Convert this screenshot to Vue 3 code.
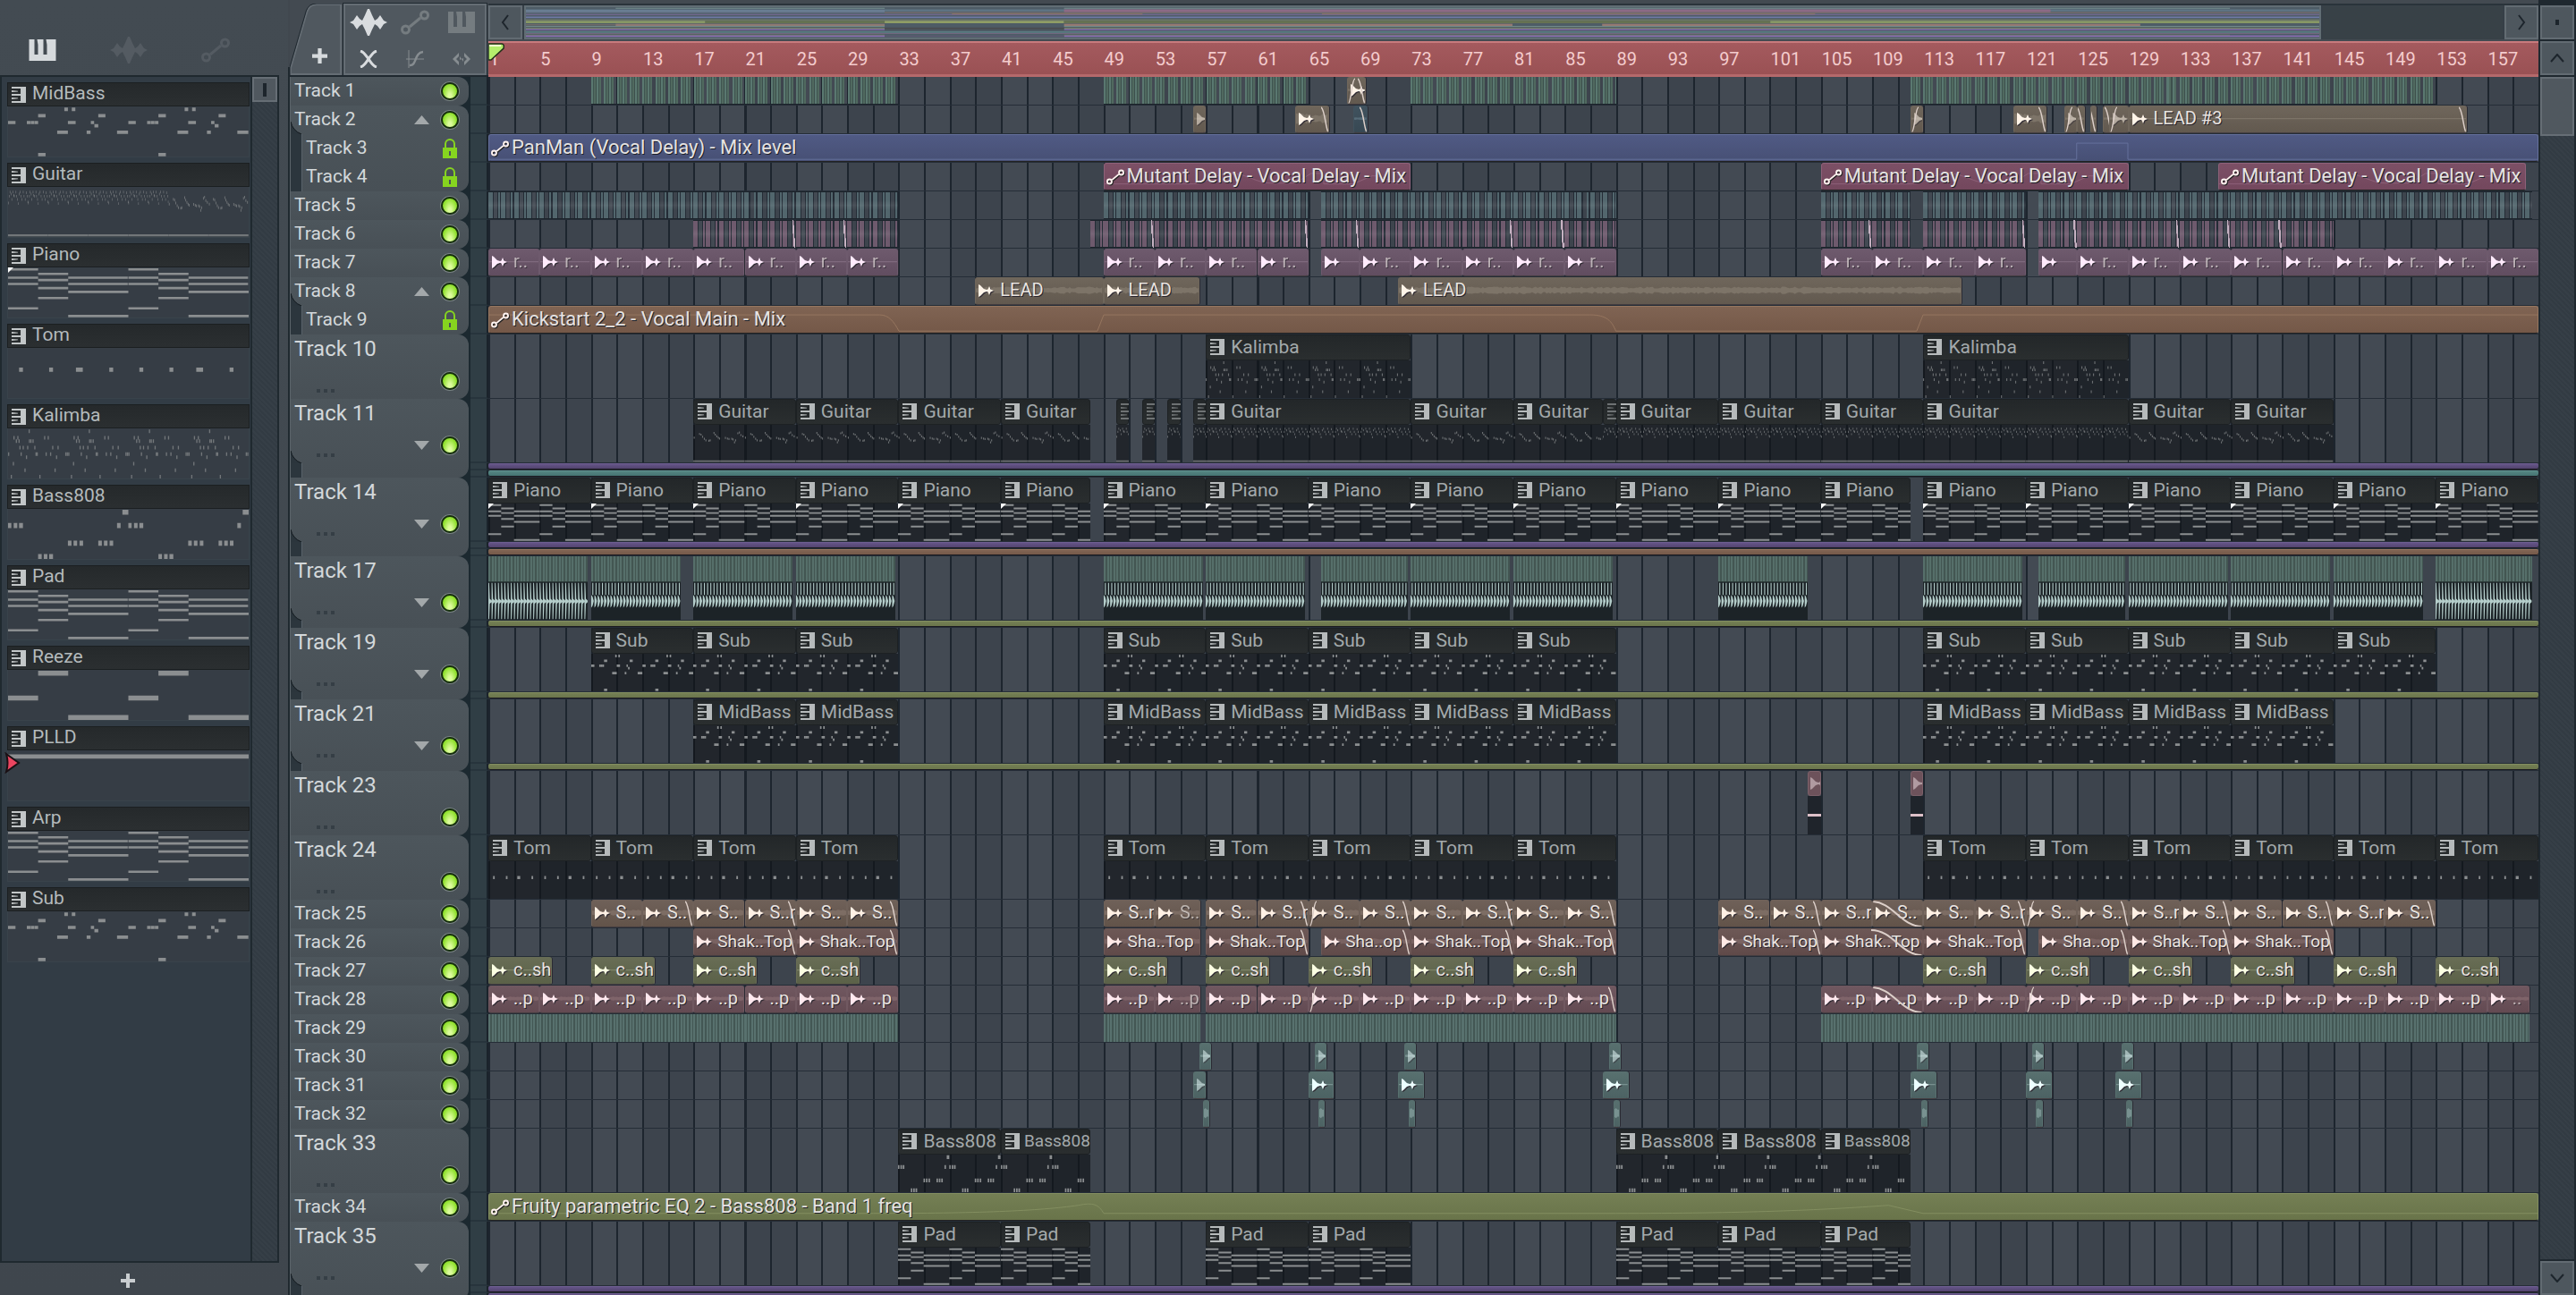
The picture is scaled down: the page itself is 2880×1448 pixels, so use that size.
<script setup>
const BARS = 160
const pct = (v) => (v / BARS) * 100 + '%'
const place = (c) => ({ left: pct(c.s), width: pct(c.e - c.s) })
const split = (a, b, step = 8) => {
  const out = []
  for (let s = a; s < b; s += step) out.push([s, Math.min(s + step, b)])
  return out
}

/* note patterns: [period, [x, y, width, height]...], 101 units per bar, 170 units tall */
const low = (y, h, list) => list.map(([x, w]) => [x, y, w, h])
const subNotes = [
  ...low(4, 12, [[189, 12], [214, 12]]),
  ...low(26, 11, [[101, 25], [303, 24]]),
  ...low(49, 11, [[0, 25], [63, 12], [76, 12], [89, 12], [201, 26], [278, 11]]),
  ...low(60, 11, [[290, 13]]),
  ...low(82, 11, [[165, 36], [264, 13], [366, 37]]),
  ...low(158, 11, [[101, 25]])
]
const chordNotes = [
  ...low(3, 8, [[0, 101]]),
  ...low(18, 8, [[101, 101]]),
  ...low(31, 8, [[0, 101], [202, 200]]),
  ...low(39, 8, [[101, 101]]),
  ...low(52, 8, [[0, 101], [202, 200]]),
  ...low(66, 8, [[101, 101]]),
  ...low(79, 8, [[202, 202]]),
  ...low(100, 8, [[101, 101]]),
  ...low(135, 8, [[0, 101]]),
  ...low(161, 8, [[202, 202]])
]
const kalimbaNotes = [
  [69, 4], [18, 26], [31, 26], [121, 26], [133, 26], [26, 37], [35, 37], [70, 37], [75, 37], [82, 37],
  [38, 59], [49, 59], [64, 59], [88, 59], [148, 59], [166, 59], [0, 81], [42, 81], [92, 81], [96, 81],
  [126, 81], [141, 81], [192, 81], [197, 81], [60, 92], [161, 92], [16, 114], [55, 136], [156, 136], [9, 158], [105, 158]
].map(([x, y]) => [x, y, 4, 12])
/* in clips this figure spans four bars instead of two */
const kalimbaWide = kalimbaNotes.map(([x, y, w, h]) => [x * 2, y, w * 2, h])
const guitarA = [
  [0, 50], [10, 27], [17, 13], [28, 20], [35, 38], [47, 13], [54, 24], [60, 27], [76, 13], [82, 27], [92, 38], [99, 52],
  [108, 20], [118, 13], [128, 27], [138, 38], [150, 13], [158, 27], [170, 38], [180, 15], [190, 27], [197, 46]
].map(([x, y]) => [x, y, 6, 9])
const guitarB = [
  [4, 54], [46, 37], [58, 40], [70, 50], [84, 59], [96, 66], [120, 68], [130, 66], [160, 32], [170, 40], [182, 48], [194, 54],
  [204, 58], [250, 55], [266, 58], [278, 60], [300, 59], [310, 62], [322, 75], [330, 66], [348, 34], [360, 30], [372, 42], [388, 48]
].map(([x, y]) => [x, y, 8, 9])
const base = [[0, 161, 402, 7]]
const patterns = {
  sub: [404, subNotes],
  chord: [404, chordNotes],
  tom: [404, [[37, 67, 13, 14], [138, 67, 13, 14], [228, 67, 23, 14], [340, 67, 13, 14]]],
  kalimba: [404, kalimbaWide],
  bass: [404, [
    ...low(3, 17, [[384, 20]]),
    ...low(48, 17, [[0, 11], [19, 12], [37, 13], [366, 12]]),
    ...low(108, 17, [[201, 12], [220, 12], [240, 12], [303, 12], [322, 12], [341, 12]]),
    ...low(153, 17, [[101, 12], [120, 12], [138, 13]])
  ]],
  reeze: [404, [[101, 3, 101, 17], [0, 87, 101, 17], [202, 153, 202, 17]]],
  plld: [808, [[0, 14, 808, 14]]],
  guitarA: [404, [...guitarA, ...guitarA.map(([x, y, w, h]) => [x + 202, y, w, h]), ...base]],
  guitarB: [404, [...guitarB, ...base]]
}
const notePath = (name, bars, from = 0) => {
  const [period, notes] = patterns[name]
  const end = (from + bars) * 101
  let d = ''
  for (let o = from * 101; o < end; o += period)
    for (const [x, y, w, h] of notes) {
      const a = o + x
      if (a < end) d += `M${a} ${y}h${Math.min(w, end - a)}v${h}h${-Math.min(w, end - a)}z`
    }
  return d
}

const pickerItems = [
  { name: 'MidBass', d: notePath('sub', 8), w: 808 },
  { name: 'Guitar', d: notePath('guitarA', 16) + notePath('guitarB', 8, 16), w: 2424 },
  { name: 'Piano', d: notePath('chord', 8), w: 808, mark: true },
  { name: 'Tom', d: notePath('tom', 8), w: 808 },
  { name: 'Kalimba', d: notePath('kalimba', 16), w: 1616 },
  { name: 'Bass808', d: notePath('bass', 8), w: 808 },
  { name: 'Pad', d: notePath('chord', 8), w: 808 },
  { name: 'Reeze', d: notePath('reeze', 8), w: 808 },
  { name: 'PLLD', d: notePath('plld', 8), w: 808, playing: true },
  { name: 'Arp', d: notePath('chord', 8), w: 808 },
  { name: 'Sub', d: notePath('sub', 8), w: 808 }
]

/* waveform outline around the middle of a clip */
const noise = (i) => Math.abs(Math.sin(i * 12.9898) * 43758.5453) % 1
const wave = (bars, amp) => {
  const n = Math.max(4, Math.round(bars * 7))
  let up = 'M0 16'
  let down = ''
  for (let i = 0; i <= n; i++) {
    const x = (i / n) * bars
    const a = 0.6 + amp * (0.4 + 0.6 * noise(i + bars))
    up += `L${x.toFixed(2)} ${(15 - a).toFixed(1)}`
    down = `L${x.toFixed(2)} ${(15 + a).toFixed(1)}` + down
  }
  return up + down + 'z'
}
const drumWave = (bars, both) => {
  let d = ''
  for (let k = 0; k < bars * 4; k++) {
    if (both) d += `M${k} 2h.25L${k + 0.45} 44L${k + 1} 49V53L${k + 0.45} 57L${k + 0.25} 98h-.25z`
    else d += `M${k + 0.35} 2h.3V34h-.3zM${k} 34L${k + 0.4} 38L${k + 0.8} 50L${k + 0.4} 63L${k} 68z`
  }
  return d
}

const midi = (label, pat, list, extra = {}) => list.map(([s, e]) => ({
  kind: 'midi', label, s, e, d: notePath(pat, e - s), w: (e - s) * 101, ...extra
}))
const stub = (s) => midi('', 'guitarA', [[s, s + 1]], { dim: true })
const audio = (color, label, list, extra = {}) => list.map(([s, e, o]) => ({
  kind: 'audio', color, label, s, e, amp: 1, ...extra, ...(o || {})
})).map((c) => ({ ...c, d: wave(c.e - c.s, c.amp) }))
const auto = (color, label, s, e, d) => ({ kind: 'auto', color, label, s, e, d })
const fill = (kind, color, list) => list.map(([s, e]) => ({ kind, color, s, e }))
const strip = (color) => ({ size: 'xs', clips: [{ kind: 'strip', color, s: 0, e: 160 }] })
const ticks = (list) => list.map((s) => ({ kind: 'tick', s, e: s + 0.25 }))
const drum = (s, e, both) => ({ kind: 'drum', s, e, d: drumWave(e - s, both) })
const O = { out: true }
const I = { in: true }
const B = { big: true }

const mutant = 'M0 25H7C8 25 8.5 12 10 12C11 12 12 24 13 24H15L16.2 12H17.2V25H19.5L21 15C22 15 22 20 23 25'
const eight = (a, b) => split(a, b, 8)
const four = (a, b) => split(a, b, 4)
const S = (list) => list.flatMap(([s, e, label, o]) => audio('sand', label, [[s, e, o]], { amp: 3 }))
const wide = [...eight(48, 88)]
const crash = (starts) => audio('moss', 'c..sh', starts.map((s) => [s, s + 4.95]), { amp: 0 })
const perc = (list) => audio('rose', '..p', list, { amp: 2 })

const groups = [
  [{ name: 'Track 1', clips: [
    ...fill('comb', 'green', [[8, 32], [48, 64], [72, 88], [111, 152]]),
    ...audio('tan', '', [[67, 68.5, { in: true, out: true }]])] }],
  [
    { name: 'Track 2', fold: 'up', clips: [
      ...audio('tan', '', [[55, 56, { dim: true }], [63, 65.6, { out: true, amp: 6 }], [111, 112, { dim: true, in: true }],
        [119, 121.6, { out: true, amp: 6 }], [123, 124, { dim: true, in: true }], [124, 124.6, { none: true, out: true }],
        [125, 125.5, { none: true, out: true }], [126, 126.8, { none: true, out: true }], [126.5, 128, { dim: true, in: true }]]),
      ...audio('slate', '', [[67.5, 68.6, { none: true, out: true }]]),
      ...audio('tan', 'LEAD #3', [[128, 154.4, { out: true, amp: 0 }]])] },
    { name: 'Track 3', child: true, lock: true, clips: [
      auto('blue', 'PanMan (Vocal Delay) - Mix level', 0, 160, 'M0 30H124V10H128V30H160')] },
    { name: 'Track 4', child: true, lock: true, clips: [48, 104, 135].map((s) =>
      auto('wine', 'Mutant Delay - Vocal Delay - Mix', s, s + 24, mutant)) }
  ],
  [{ name: 'Track 5', clips: fill('hits', 'steel', [[0, 32], [48, 64], [65, 88], [104, 111], [112, 120], [121, 159.5]]) }],
  [{ name: 'Track 6', clips: [
    ...fill('hits', 'plum', [[16, 32], [47, 48], [48, 64], [65, 88], [104, 111], [112, 120], [121, 144]]),
    ...ticks([23.7, 27.7, 51.7, 63.7, 67.7, 79.7, 83.7, 107.7, 119.7, 123.7, 131.7, 135.7, 139.7])] }],
  [{ name: 'Track 7', clips: audio('plum', 'r..', [...four(0, 32), ...four(48, 64), [65, 68, { label: '' }],
    ...four(68, 88), ...four(104, 120), [121, 124, { label: '' }], ...four(124, 160)], { soft: true, amp: 0 }) }],
  [
    { name: 'Track 8', fold: 'up', clips: audio('tan', 'LEAD', [[38, 48], [48, 55.5], [71, 115]], { amp: 4 }) },
    { name: 'Track 9', child: true, lock: true, clips: [
      auto('brown', 'Kickstart 2_2 - Vocal Main - Mix', 0, 160,
        'M0 10H30.5C31.2 10 31.6 18 32 30H47.5L48 10H86C87.3 10 87.7 18 88 30H111.5L112 10H160')] }
  ],
  [{ name: 'Track 10', size: 'l', clips: midi('Kalimba', 'kalimba', [[56, 72], [112, 128]]) }],
  [
    { name: 'Track 11', size: 'l', fold: 'down', clips: [
      ...midi('Guitar', 'guitarB', [...eight(16, 40), [40, 47]]), ...[49, 51, 53, 55].flatMap(stub),
      ...midi('Guitar', 'guitarA', [[56, 72]]), ...midi('Guitar', 'guitarB', [[72, 80], [80, 87]]), ...stub(87),
      ...midi('Guitar', 'guitarA', [...eight(88, 112), [112, 128]]), ...midi('Guitar', 'guitarB', eight(128, 144))] },
    strip('violet'), strip('teal')
  ],
  [
    { name: 'Track 14', size: 'l', fold: 'down', clips: midi('Piano', 'chord',
      [...eight(0, 40), [40, 47], ...eight(48, 104), [104, 111], ...eight(112, 160)], { mark: true }) },
    strip('violet'), strip('brown')
  ],
  [
    { name: 'Track 17', size: 'l', fold: 'down', clips: [
      drum(0, 7.75, true), ...[[8, 15], [16, 23.75], [24, 31.75], [48, 55.75], [56, 63.75], [65, 71.75], [72, 79.75],
        [80, 87.75], [96, 103], [112, 119.75], [121, 127.75], [128, 135.75], [136, 143.75], [144, 151]].map(([a, b]) => drum(a, b)),
      drum(152, 159.5, true)] },
    strip('olive')
  ],
  [{ name: 'Track 19', size: 'l', fold: 'down', clips: midi('Sub', 'sub', [...eight(8, 32), ...wide, ...eight(112, 152)]) }, strip('olive')],
  [{ name: 'Track 21', size: 'l', fold: 'down', clips: midi('MidBass', 'sub', [...eight(16, 32), ...wide, ...eight(112, 144)]) }, strip('olive')],
  [{ name: 'Track 23', size: 'l', clips: [{ kind: 'shot', s: 103, e: 104 }, { kind: 'shot', s: 111, e: 112 }] }],
  [{ name: 'Track 24', size: 'l', clips: midi('Tom', 'tom', [...eight(0, 32), ...wide, ...eight(112, 160)]) }],
  [{ name: 'Track 25', clips: S([
    [8, 12, 'S..'], [12, 16, 'S..', O], [16, 20, 'S..'], [20, 24, 'S..r', O], [24, 28, 'S..'], [28, 32, 'S..', O],
    [48, 52, 'S..r'], [52, 55.6, 'S..', { soft: true }], [56, 60, 'S..'], [60, 64, 'S..r', O], [64, 68, 'S..', I], [68, 72, 'S..', O],
    [72, 76, 'S..'], [76, 80, 'S..r', O], [80, 84, 'S..'], [84, 88, 'S..', O], [96, 100, 'S..'], [100, 104, 'S..', O],
    [104, 108, 'S..r'], [108, 112, 'S..', B], [112, 116, 'S..'], [116, 120, 'S..r', O], [120, 124, 'S..', I], [124, 128, 'S..', O],
    [128, 132, 'S..r'], [132, 136, 'S..', O], [136, 140, 'S..'], [140, 144, 'S..', O], [144, 148, 'S..r'], [148, 152, 'S..', O]]) }],
  [{ name: 'Track 26', clips: [
    ...audio('clay', 'Shak..Top', [[16, 24, O], [24, 32, O], [48, 55.6, { label: 'Sha..Top' }], [56, 64, O],
      [65, 72, { label: 'Sha..op', out: true }], [72, 80, O], [80, 88, O], [96, 104, O], [104, 112, B], [112, 120, O],
      [121, 128, { label: 'Sha..op', out: true }], [128, 136, O], [136, 144, O]], { amp: 3, tight: true })] }],
  [{ name: 'Track 27', clips: crash([0, 8, 16, 24, 48, 56, 64, 72, 80, 112, 120, 128, 136, 144, 152]) }],
  [{ name: 'Track 28', clips: perc([...four(0, 32), [48, 52], [52, 55.6, { soft: true }], ...four(56, 64), [64, 68, I], ...four(68, 84),
    [84, 88, O], [104, 108], [108, 112, B], ...four(112, 120), [120, 124, I], ...four(124, 156), [156, 159.3, { label: '..', soft: true }]]) }],
  [{ name: 'Track 29', clips: fill('dense', 'sea', [[0, 32], [48, 55.6], [56, 88], [104, 159.3]]) }],
  [{ name: 'Track 30', clips: audio('sea', '', [55.5, 64.5, 71.5, 87.5, 111.5, 120.5, 127.5].map((s) => [s, s + 0.9]), { dim: true }) }],
  [{ name: 'Track 31', clips: audio('sea', '', [[55, 56, { dim: true }], [64, 66], [71, 73], [87, 89], [111, 113], [120, 122], [127, 129]], { amp: 0 }) }],
  [{ name: 'Track 32', clips: audio('sea', '', [55.8, 64.8, 71.8, 87.8, 111.8, 120.8, 127.8].map((s) => [s, s + 0.5]), { none: true, amp: 7 }) }],
  [{ name: 'Track 33', size: 'l', clips: [
    ...midi('Bass808', 'bass', [[32, 40], [88, 96], [96, 104]]), ...midi('Bass808', 'bass', [[40, 47], [104, 111]], { tight: true })] }],
  [{ name: 'Track 34', clips: [auto('olive', 'Fruity parametric EQ 2 - Bass808 - Band 1 freq', 0, 160,
    'M0 24H30C38 24 43 21 46 14C47.2 10 47.6 13 48 24H88C98 24 104 20 109.3 14L112 24H160')] }],
  [
    { name: 'Track 35', size: 'l', fold: 'down', clips: midi('Pad', 'chord', [[32, 40], [40, 47], [56, 64], [64, 72], [88, 96], [96, 104], [104, 111]]) },
    strip('violet'), strip('violet')
  ]
]

const barLabels = Array.from({ length: 40 }, (_, i) => i * 4 + 1)

/* condensed view of the song: [x, y, width, height, colour] in bars and pixels */
const miniMap = [
  [0, 3, 160, 3, '#5f7484'], [0, 4, 32, 3, '#6c7f95'], [0, 8, 160, 1, '#6d7390'],
  [8, 1, 24, 1, '#7f9a97'], [48, 1, 104, 1, '#7f9a97'], [48, 3, 88, 4, '#8c6a86'], [32, 7, 128, 1, '#8a7468'],
  [0, 10, 160, 1, '#7d6a9a'], [0, 13, 160, 2, '#6f7aa6'], [38, 9, 17, 1, '#94795f'], [71, 9, 44, 1, '#94795f'],
  [0, 17, 160, 1, '#8a8f6a'], [0, 19, 16, 3, '#8f9f66'], [16, 19, 16, 3, '#69764f'], [32, 19, 16, 3, '#98a566'],
  [48, 19, 63, 3, '#6a7550'], [111, 19, 49, 3, '#8f9f66'],
  [0, 24, 8, 1, '#8a756b'], [8, 23, 24, 3, '#8e7a73'], [48, 23, 40, 3, '#957a73'], [96, 23, 48, 3, '#957a73'],
  [0, 26, 32, 1, '#7c9793'], [48, 26, 112, 1, '#7c9793'],
  [0, 29, 32, 1, '#9aa66c'], [0, 30, 32, 2, '#7a68a2'], [48, 29, 112, 1, '#9aa66c'], [48, 30, 112, 2, '#7a68a2'],
  [0, 34, 160, 1, '#6aa3a5'], [0, 36, 160, 1, '#7a6a86'], [0, 38, 32, 1, '#758158'], [48, 38, 104, 1, '#758158'],
  [0, 39, 32, 2, '#8a6eb4'], [48, 39, 112, 2, '#8a6eb4'], [32, 39, 16, 2, '#5c5a72'], [32, 28, 16, 3, '#4a4d52']
]
</script>

<template>
  <div class="app">
    <svg class="defs" aria-hidden="true">
      <symbol id="i-keys" viewBox="0 0 30 24">
        <path d="M0 0h6v17h4V6L9 0h7v17h4V6l-1-6h11v24H0z" />
      </symbol>
      <symbol id="i-wave" viewBox="0 0 42 30">
        <path d="M0 15l4-2 4-6 3 4 3 2 3-6 3-7h2l3 7 3 6 3-2 3-4 4 6 4 2-4 2-4 6-3-4-3-2-3 6-3 7h-2l-3-7-3-6-3 2-3 4-4-6z" />
      </symbol>
      <symbol id="i-auto" viewBox="0 0 32 28">
        <g fill="none" stroke="currentColor" stroke-width="3"><circle cx="5.500" cy="22" r="4" /><circle cx="26.500" cy="6" r="4" /><path d="M10 19L22 9" /></g>
      </symbol>
      <symbol id="i-midi" viewBox="0 0 16 18">
        <path d="M0 0h16v18H0v-2h10v-6H0V8h10V2H0zM0 4l7 .8v.8l-7 .4zM0 12l7 .4v.8l-7 .8z" />
      </symbol>
      <symbol id="i-audio" viewBox="0 0 18 14">
        <path d="M0 0l2 1 4 4 3 1 1.500-.5L12 2l1.500 3.500L17 7l-3.500 1.500L12 12l-1.500-3.500L9 8 6 9l-4 4-2 1z" />
      </symbol>
      <symbol id="i-plus" viewBox="0 0 16 16"><path d="M6 0h4v6h6v4h-6v6H6v-6H0V6h6z" /></symbol>
      <symbol id="i-lock" viewBox="0 0 16 22">
        <path d="M3 11V6a5 5 0 0110 0v5" fill="none" stroke="currentColor" stroke-width="2" />
        <path d="M0 10h16v12H0zM7 14v5h2v-5z" fill-rule="evenodd" />
      </symbol>
    </svg>

    <aside class="picker">
      <div class="picker-tabs">
        <button class="pt on" aria-label="Patterns"><svg width="31" height="24"><use href="#i-keys" /></svg></button>
        <button class="pt" aria-label="Audio"><svg width="42" height="30"><use href="#i-wave" /></svg></button>
        <button class="pt" aria-label="Automation"><svg width="32" height="28"><use href="#i-auto" /></svg></button>
      </div>
      <div class="picker-main">
        <div class="picker-list">
          <div v-for="p in pickerItems" :key="p.name" class="pat">
            <div class="pat-head"><svg width="16" height="18"><use href="#i-midi" /></svg><span>{{ p.name }}</span></div>
            <div class="pat-body">
              <svg class="notes" :viewBox="`0 0 ${p.w} 170`" preserveAspectRatio="none"><path :d="p.d" :class="{ faint: p.name === 'Kalimba' || p.name === 'Guitar' }" /></svg>
              <i v-if="p.mark" class="corner"></i>
              <svg v-if="p.playing" class="play" width="18" height="24"><path d="M2 2L16 12 2 22Q5 12 2 2z" fill="#ec4560" stroke="#1a1014" stroke-width="2" /></svg>
            </div>
          </div>
        </div>
        <div class="picker-scroll"><button class="picker-thumb" aria-label="Scroll"><i></i></button></div>
      </div>
      <button class="picker-add" aria-label="Add pattern"><svg width="16" height="16"><use href="#i-plus" /></svg></button>
    </aside>

    <main class="playlist">
      <div class="arrange">
        <header class="top">
          <div class="tools">
            <button class="tab" aria-label="Add track">
              <svg class="tab-shape" viewBox="0 0 60 80" preserveAspectRatio="none"><path d="M1 80V72L20 9Q23 1 31 1H59V79H1z" fill="#50585f" stroke="#656d74" stroke-width="2" /><path d="M0 80V71L19 8Q22 0 31 0H60" fill="none" stroke="#1f282f" stroke-width="1" /></svg>
              <svg class="tab-plus" width="17" height="17"><use href="#i-plus" /></svg>
            </button>
            <div class="toolbox">
              <button class="on" aria-label="Audio clips"><svg width="42" height="30"><use href="#i-wave" /></svg></button>
              <button aria-label="Automation clips"><svg width="32" height="28"><use href="#i-auto" /></svg></button>
              <button aria-label="Pattern clips"><svg width="30" height="24"><use href="#i-keys" /></svg></button>
              <button class="on" aria-label="Crossfade"><svg width="20" height="20" fill="none" stroke="currentColor" stroke-width="3"><path d="M1 1C5 2 7 6 10 10C13 14 15 18 19 19M19 1C15 2 13 6 10 10C7 14 5 18 1 19" /></svg></button>
              <button aria-label="Curve"><svg width="20" height="20" fill="none" stroke="currentColor"><path d="M3 0V20M0 10H20" stroke-width="1" /><path d="M4 17C12 18 9 3 19 2" stroke-width="2.500" /></svg></button>
              <button aria-label="Stretch"><svg width="20" height="14"><path d="M0 7l7-7v4l-3 3 3 3v4zM20 7l-7-7v4l3 3-3 3v4zM8 4l2 3 2-1v4l-2-3-2 1z" /></svg></button>
            </div>
          </div>
          <div class="nav">
            <div class="overview">
              <button class="box" aria-label="Scroll left"><svg width="10" height="18" fill="none" stroke="#1d252c" stroke-width="2"><path d="M8 1L2 9L8 17" /></svg></button>
              <div class="mini">
                <svg viewBox="0 0 160 42" preserveAspectRatio="none">
                  <rect v-for="(r, i) in miniMap" :key="i" :x="r[0]" :y="r[1]" :width="r[2]" :height="r[3]" :fill="r[4]" />
                </svg>
              </div>
              <div class="mini-rest"></div>
              <button class="box" aria-label="Scroll right"><svg width="10" height="18" fill="none" stroke="#1d252c" stroke-width="2"><path d="M2 1L8 9L2 17" /></svg></button>
            </div>
            <div class="ruler">
              <span v-for="n in barLabels" :key="n">{{ n }}</span>
              <svg class="playhead" width="19" height="22"><path d="M0 1H15Q18 1 17 6L3 19H0z" fill="#b5ee6c" stroke="#21301a" stroke-width="1.500" /><path d="M1 3H14" stroke="#f2ffd0" stroke-width="2" /></svg>
            </div>
          </div>
        </header>

        <div class="tracks">
          <section v-for="(g, gi) in groups" :key="gi" class="group">
            <div class="g-head">
              <div v-for="(t, ti) in g" :key="ti" class="th" :class="[t.size || 's', { child: t.child || t.size === 'xs' }]">
                <template v-if="t.name">
                  <span class="t-name">{{ t.name }}</span>
                  <div class="t-ctl">
                    <span v-if="t.size === 'l'" class="dots"><i></i><i></i><i></i></span>
                    <button v-if="t.fold" class="fold" :class="t.fold" aria-label="Fold group"></button>
                    <button v-if="t.lock" class="lock" aria-label="Locked"><svg width="16" height="22"><use href="#i-lock" /></svg></button>
                    <button v-else class="led" aria-label="Mute"></button>
                  </div>
                  <svg v-if="t.fold" class="bend" width="12" height="14"><path d="M0 0Q2 10 12 14H0z" fill="#2b353c" /><path d="M0 0Q2 10 12 14" fill="none" stroke="#12191e" /></svg>
                </template>
              </div>
            </div>
            <div class="g-lanes">
              <div v-for="(t, ti) in g" :key="ti" class="row" :class="t.size || 's'">
                <div class="edge"></div>
                <div class="lane">
                  <div v-for="(c, ci) in t.clips" :key="ci" class="clip" :class="[c.kind, c.color, { dim: c.dim, soft: c.soft, tight: c.tight }]" :style="place(c)">
                    <template v-if="c.kind === 'midi'">
                      <div class="m-head"><svg width="16" height="18"><use href="#i-midi" /></svg><span v-if="c.label">{{ c.label }}</span></div>
                      <div class="m-body">
                        <svg class="notes" :viewBox="`0 0 ${c.w} 170`" preserveAspectRatio="none"><path :d="c.d" :class="{ faint: c.label === 'Kalimba' || c.label === 'Guitar' || !c.label }" /></svg>
                        <i v-if="c.mark" class="corner"></i>
                      </div>
                    </template>
                    <template v-else-if="c.kind === 'audio'">
                      <svg class="wav" :viewBox="`0 0 ${c.e - c.s} 32`" preserveAspectRatio="none"><path :d="c.d" /></svg>
                      <svg v-if="!c.none" class="a-ico" width="18" height="14"><use href="#i-audio" /></svg>
                      <span v-if="c.label">{{ c.label }}</span>
                      <svg v-if="c.in" class="fade in" viewBox="0 0 8 30" preserveAspectRatio="none"><path d="M0 29C4 29 4 1 8 1" /></svg>
                      <svg v-if="c.out" class="fade out" viewBox="0 0 8 30" preserveAspectRatio="none"><path d="M0 1C4 3 5 24 8 29" /></svg>
                      <svg v-if="c.big" class="fade big" viewBox="0 0 56 30" preserveAspectRatio="none"><path d="M0 1C24 1 32 29 56 29" /></svg>
                    </template>
                    <template v-else-if="c.kind === 'auto'">
                      <svg class="curve" :viewBox="`0 0 ${c.e - c.s} 32`" preserveAspectRatio="none"><path :d="c.d" vector-effect="non-scaling-stroke" /></svg>
                      <svg class="au-ico" width="20" height="18"><use href="#i-auto" /></svg>
                      <span>{{ c.label }}</span>
                    </template>
                    <template v-else-if="c.kind === 'drum'">
                      <div class="d-head"></div>
                      <div class="d-body"><svg class="notes" :viewBox="`0 0 ${(c.e - c.s) * 4} 100`" preserveAspectRatio="none"><path :d="c.d" /></svg></div>
                    </template>
                    <template v-else-if="c.kind === 'shot'">
                      <div class="s-head"><svg width="18" height="14"><use href="#i-audio" /></svg></div>
                      <div class="s-body"><i></i></div>
                    </template>
                  </div>
                </div>
              </div>
            </div>
          </section>
        </div>
      </div>

      <div class="vscroll">
        <button class="box" aria-label="Options"><i class="pin"></i></button>
        <button class="box" aria-label="Scroll up"><svg width="16" height="10" fill="none" stroke="#1d252c" stroke-width="2"><path d="M1 9L8 1L15 9" /></svg></button>
        <div class="v-track"><button class="v-thumb" aria-label="Scroll position"></button></div>
        <button class="box" aria-label="Scroll down"><svg width="16" height="10" fill="none" stroke="#1d252c" stroke-width="2"><path d="M1 1L8 9L15 1" /></svg></button>
      </div>
    </main>
  </div>
</template>

<style>
body { background: #41484f; }
</style>

<style scoped>
* { box-sizing: border-box; }
.app { display: flex; height: 100vh; overflow: hidden; background: linear-gradient(#434b52, #3f464d); font-family: Roboto, "Liberation Sans", sans-serif; font-size: 21px; color: #d3d8da; }
button { border: 0; padding: 0; background: none; color: inherit; font: inherit; display: flex; align-items: center; justify-content: center; }
svg { display: block; }
svg:not([fill]) { fill: currentColor; }
.defs { position: absolute; width: 0; height: 0; }

/* picker */
.picker { width: 312px; flex: none; display: flex; flex-direction: column; }
.picker-tabs { height: 84px; flex: none; display: flex; align-items: center; gap: 60px; padding: 28px 0 0 32px; color: #545b62; }
.picker-tabs .on { color: #d6dadd; }
.pt { height: 36px; }
.picker-main { flex: 1; min-height: 0; display: flex; border: 2px solid #1f292f; }
.picker-list { flex: 1; background: #323c45; padding: 6px 1px 0 6px; border-right: 2px solid #1f292f; }
.pat { margin-bottom: 6px; }
.pat-head { height: 27px; display: flex; align-items: center; gap: 7px; padding: 0 4px; background: linear-gradient(#25292b, #2b2f31); border: 1px solid #1b1f21; color: #b4babc; }
.pat-head svg { color: #c3c7c8; }
.pat-head span { line-height: 22px; padding-bottom: 3px; }
.pat-body { height: 57px; position: relative; background: #363d45; border: 1px solid #39434b; border-top: 0; }
.notes { width: 100%; height: 100%; color: #8b8e90; }
.faint { opacity: .7; }
.corner { position: absolute; left: 0; top: 0; border: 3px solid #fff; border-right-color: transparent; border-bottom-color: transparent; }
.play { position: absolute; left: -4px; top: 2px; }
.picker-scroll { width: 28px; background: repeating-linear-gradient(45deg, #363f47 0 2px, #323b43 2px 4px); }
.picker-thumb { width: 28px; height: 28px; background: #50585f; border: 2px solid #666e75; }
.picker-thumb i { width: 4px; height: 15px; background: #1d252c; }
.picker-add { height: 36px; flex: none; color: #c9cdd0; padding: 4px 26px 0 0; }

/* playlist frame */
.playlist { flex: 1; min-width: 0; margin-left: 10px; display: flex; border-left: 2px solid #1f292f; background: #1c2930; border-image: linear-gradient(#41484f 0 76px, #1f292f 76px) 1; }
.arrange { flex: 1; min-width: 0; display: flex; flex-direction: column; }
.top { flex: none; height: 86px; display: flex; background: #434a51; border-bottom: 2px solid #1f282f; padding-top: 4px; }
.tools { width: 222px; flex: none; display: flex; gap: 2px; }
.tab { width: 58px; position: relative; padding: 36px 0 0 8px; color: #d6dadd; }
.tab-shape { position: absolute; left: 0; top: 0; width: 100%; height: 100%; }
.tab-plus { position: relative; }
.toolbox { width: 160px; display: grid; grid-template-columns: repeat(3, 1fr); grid-template-rows: 1fr 1fr; background: #50585f; border: 2px solid #656d74; color: #757c80; outline: 1px solid #1f282f; }
.toolbox .on { color: #d9dcdf; }
.toolbox button:nth-child(n+4) { padding-top: 6px; }
.toolbox button:nth-child(n+5) { color: #878d91; }
.nav { flex: 1; min-width: 0; }
.overview { height: 40px; display: flex; background: #363f47; border-top: 2px solid #2a333a; gap: 2px; }
.box { width: 38px; height: 38px; flex: none; background: #4e575e; border: 2px solid #626b72; }
.mini { flex: 2009 0 0; min-width: 0; background: #4e5c66; border: 2px solid #616d74; }
.mini svg { width: 100%; height: 100%; }
.mini-rest { flex: 201 0 0; background: #384147; }
.ruler { height: 40px; display: flex; position: relative; margin-top: 2px; background: linear-gradient(#a45a5e, #9a5154); border-top: 2px solid #c87a7d; border-bottom: 3px solid #b5696b; color: #f4cccd; }
.ruler span { flex: 1 0 0; min-width: 0; padding-left: 1px; font-size: 20px; line-height: 36px; white-space: nowrap; }
.playhead { position: absolute; left: 0; top: 0; }

/* tracks */
.tracks { flex: 1; min-height: 0; overflow: hidden; }
.group { display: flex; }
.g-head { width: 200px; flex: none; background: linear-gradient(#4d565c, #485056); border-radius: 0 12px 12px 0; border-left: 1px solid #5b646a; margin-right: 2px; overflow: hidden; }
.th { position: relative; display: flex; }
.s { height: 32px; }
.l { height: 72px; }
.xs { height: 8px; }
.th.s { align-items: center; padding: 0 10px 0 4px; justify-content: space-between; }
.th.s .t-name { line-height: 28px; padding-bottom: 2px; }
.th.l { flex-direction: column; padding: 1px 10px 0 4px; }
.th.l .t-name { font-size: 24px; line-height: 30px; height: 39px; }
.th.child { padding-left: 17px; }
.th.child::before { content: ""; position: absolute; left: 0; top: 0; bottom: 0; width: 12px; background: #2c363d; border-right: 1px solid #59626a; }
.t-ctl { display: flex; align-items: center; justify-content: flex-end; gap: 13px; height: 24px; }
.dots { display: flex; gap: 4px; margin: 22px auto 0 25px; }
.dots i { width: 4px; height: 4px; background: #353e45; }
.fold { width: 17px; height: 10px; background: #a3a8aa; clip-path: polygon(50% 0, 100% 100%, 0 100%); }
.fold.down { clip-path: polygon(0 0, 100% 0, 50% 100%); }
.led { width: 20px; height: 20px; margin-right: 1px; border-radius: 50%; background: radial-gradient(ellipse at 50% 85%, #dcfb9c 0 15%, #8fe02c 70%); border: 2px solid #16300c; box-shadow: 0 0 0 1px #7a8384; }
.lock { width: 16px; color: #86d41f; margin-right: 3px; }
.bend { position: absolute; left: 0; bottom: 0; }

.g-lanes { flex: 1; min-width: 0; }
.row { display: flex; }
.edge { width: 20px; flex: none; background: #303e45; border-right: 2px solid #1b232b; border-bottom: 2px solid #27343c; }
.lane { container-type: inline-size; flex: 1; min-width: 0; position: relative; border-bottom: 1px solid #252d37;
  background: repeating-linear-gradient(90deg, #1d252e 0 2px, transparent 2px 1.25%), repeating-linear-gradient(90deg, #434a53 0 2.5%, #3d444d 2.5% 5%); }
.clip { position: absolute; top: 0; bottom: 0; overflow: hidden; white-space: nowrap; }

.tan { --a: #6f665b; --b: #62594f; --w: #7d7468; --i: #fff4e8; }
.slate { --a: #40525e; --b: #374853; --w: #566b78; --i: #dfe8ee; }
.plum { --a: #6e5a6d; --b: #614d60; --w: #7f6a7e; --i: #ffeafc; }
.sand { --a: #6f6159; --b: #625349; --w: #7d6d64; --i: #fff0e4; }
.clay { --a: #6d5856; --b: #604a49; --w: #7a6362; --i: #ffe9e6; }
.moss { --a: #686d55; --b: #5b6148; --w: #7f8569; --i: #fbffe2; }
.rose { --a: #705860; --b: #634a52; --w: #7f646a; --i: #ffe8ee; }
.sea { --a: #58706f; --b: #4c6263; --w: #789190; --i: #ecffff; }
.audio { margin-right: 1px; display: flex; align-items: flex-start; gap: 6px; padding-left: 3px; background: linear-gradient(var(--a), var(--b)); border: 1px solid var(--a); border-bottom-color: #443d40; border-radius: 3px; color: #e9e4e0; font-size: 20px; line-height: 27px; text-shadow: 1px 1px 0 #26222a; box-shadow: 1px 0 0 #2a2a33; }
.audio span { position: relative; }
.audio.soft span { opacity: .65; }
.audio.tight { font-size: 19px; gap: 5px; }
.wav { position: absolute; left: 0; top: 0; width: 100%; height: 100%; color: var(--w); }
.a-ico { flex: none; position: relative; margin-top: 7px; color: var(--i); filter: drop-shadow(1px 1px 0 #2c2830); }
.dim .a-ico { opacity: .5; }
.fade { position: absolute; top: 0; width: 8px; height: 30px; stroke: #dccfc9; stroke-width: 1.500; }
.fade path { fill: none; }
.fade.in { left: 0; }
.fade.out { right: 0; }
.fade.big { right: 0; width: calc(100cqw / 40); stroke-width: 2; }

.auto { display: flex; align-items: flex-start; gap: 3px; padding-left: 2px; background: linear-gradient(var(--a), var(--b)); border: 1px solid var(--w); border-bottom-color: #222; border-radius: 3px; color: #e6e3e2; font-size: 22px; line-height: 27px; text-shadow: 1px 1px 0 #1d1f28; }
.auto span { position: relative; }
.blue { --a: #505a84; --b: #475075; --w: #65709c; }
.wine { --a: #7c5066; --b: #73475d; --w: #8e6179; }
.brown { --a: #806453; --b: #745848; --w: #96765f; }
.olive { --a: #747f54; --b: #69744a; --w: #838e60; }
.violet { --a: #655588; --b: #4e3f69; --w: #6d5d90; }
.teal { --a: #558582; --b: #427170; --w: #5d8f8c; }
.curve { position: absolute; left: 0; top: 0; width: 100%; height: 100%; stroke: var(--w); stroke-width: 1; }
.curve path { fill: none; }
.au-ico { flex: none; position: relative; margin-top: 6px; filter: drop-shadow(1px 1px 0 #222); color: #fff3f0; }

.strip { background: linear-gradient(var(--a), var(--b)); border-radius: 2px; border-top: 1px solid var(--w); box-shadow: inset 0 -1px 0 #1b1a20; }

.midi { display: flex; flex-direction: column; }
.m-head { height: 29px; flex: none; display: flex; align-items: center; gap: 7px; padding: 0 0 2px 4px; background: linear-gradient(#232729, #2a2e2f); border: 1px solid #1d2123; border-radius: 3px; color: #a3a9ab; line-height: 26px; }
.m-head svg { flex: none; color: #b6babb; }
.midi.tight { font-size: 19px; }
.tight .m-head { gap: 5px; }
.midi.dim .m-head svg { opacity: .5; }
.m-body { flex: 1; min-height: 0; position: relative; background: rgba(17, 20, 25, .66); }
.midi .notes { position: absolute; left: 0; top: 0; }

.comb { background: repeating-linear-gradient(90deg, #5a7870 0 2px, #3f5450 2px 3px, #50695f 3px 5px, #3d504d 5px 6px, #5a7870 6px 8px, #3f5450 8px 9px, #50695f 9px 11px, transparent 11px calc(100cqw / 160)); border-bottom: 1px solid #1c242b; }
.hits { background: linear-gradient(transparent 30%, rgba(255, 255, 255, .07) 50%, transparent 70%), repeating-linear-gradient(90deg, var(--a) 0 5px, #242c36 5px 6px, transparent 6px 10px, #242c36 10px 11px, var(--a) 11px 13px, #242c36 13px calc(100cqw / 160)); border-bottom: 1px solid #1c242b; border-top: 1px solid #1c242b; }
.steel { --a: #52666d; --b: #4c6067; }
.dense { background: repeating-linear-gradient(90deg, #58716e 0 2px, #435754 2px calc(100cqw / 640)); }
.tick { background: linear-gradient(86deg, transparent 30%, #c6b2c2 32% 62%, transparent 64%); }

.drum { display: flex; flex-direction: column; }
.d-head { height: 29px; background: repeating-linear-gradient(90deg, #566f6a 0 2px, #435652 2px calc(100cqw / 640)); border-bottom: 1px solid #2b3a38; }
.d-body { flex: 1; min-height: 0; position: relative; background: #1c2327; }
.d-body .notes { color: #b4cdca; }

.s-head { height: 28px; overflow: hidden; padding: 6px 0 0 2px; background: #6d525b; border: 1px solid #7c6069; border-radius: 3px; color: #b09aa1; }
.s-body { height: 43px; background: #1f242b; display: flex; align-items: center; }
.s-body i { width: 100%; height: 3px; background: #dcc0c8; }

/* vertical scroller */
.vscroll { width: 42px; flex: none; display: flex; flex-direction: column; gap: 2px; padding: 6px 2px 0; background: #1f282f; }
.v-track { flex: 1; min-height: 0; background: repeating-linear-gradient(45deg, #363f47 0 2px, #323b43 2px 4px); }
.v-thumb { width: 38px; height: 66px; background: #50585f; border: 2px solid #666e75; }
.pin { width: 4px; height: 6px; background: #1d252c; }
</style>
